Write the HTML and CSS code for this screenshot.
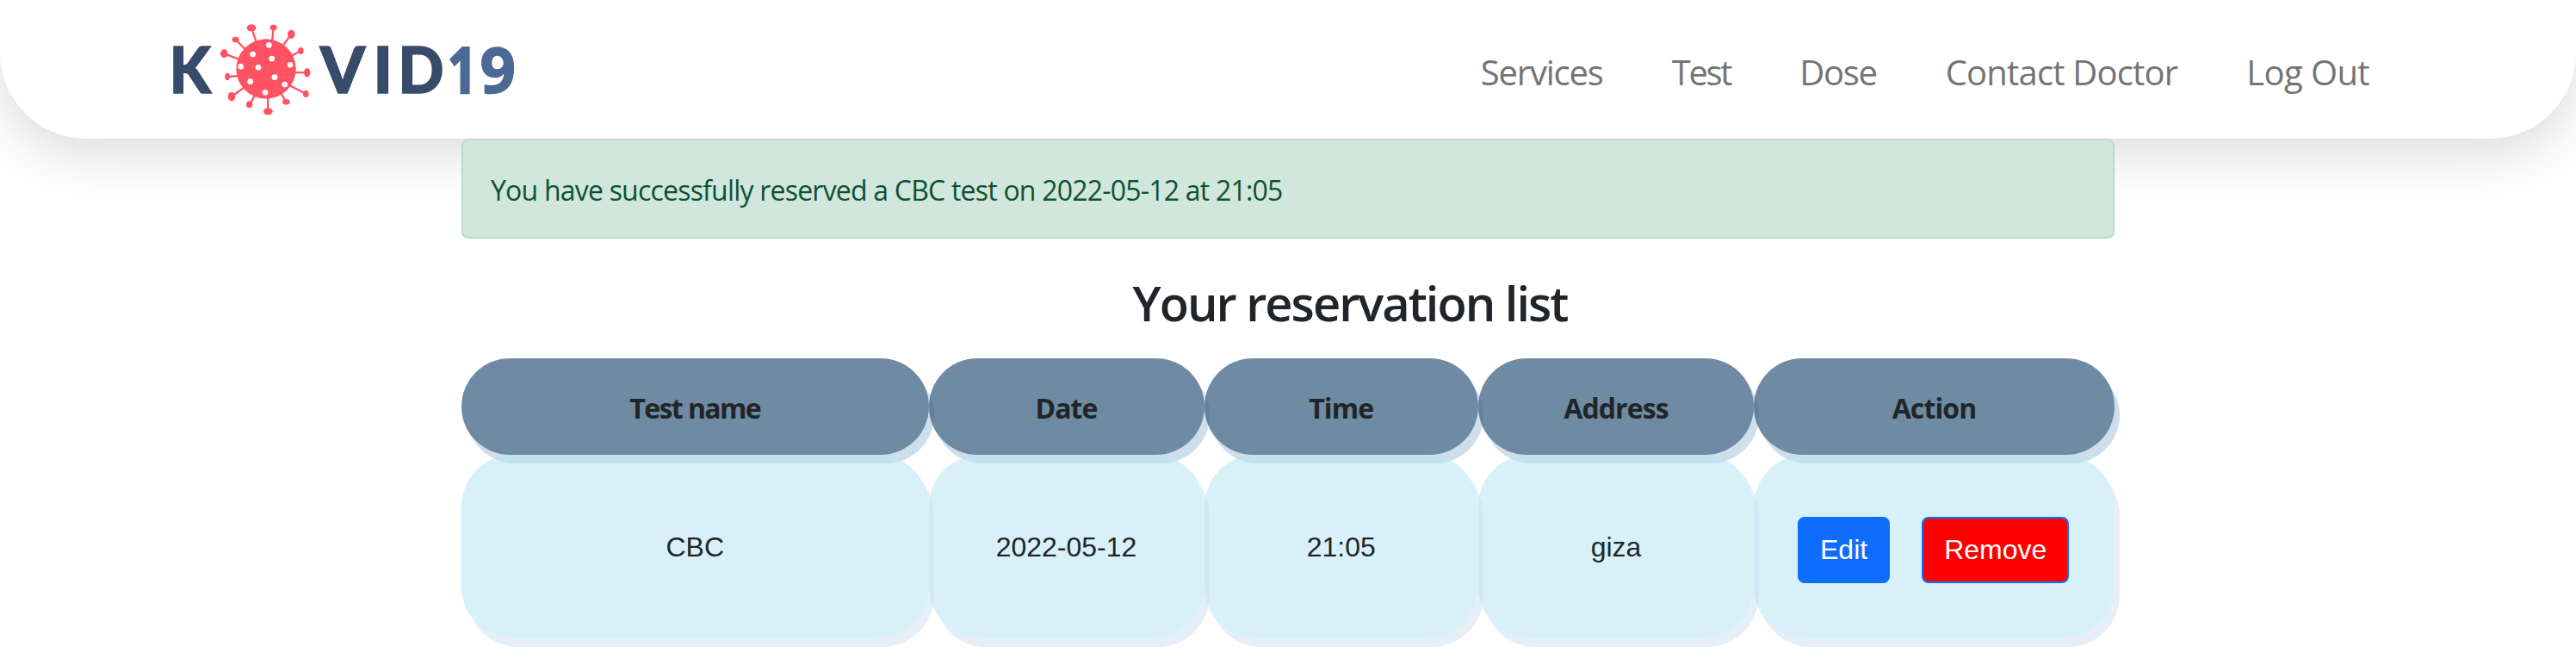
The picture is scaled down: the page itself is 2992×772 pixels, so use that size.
FILE: index.html
```
<!DOCTYPE html>
<html lang="en">
<head>
<meta charset="utf-8">
<title>Kovid19 - Reservations</title>
<link rel="stylesheet" href="styles.css">
</head>
<body>
<header class="navbar">
  <a class="brand" aria-label="Kovid19">
    <svg class="logo" viewBox="190 10 420 130" width="420" height="130">
      <g class="logo-text">
        <text x="196.700" y="108.300" textLength="48" lengthAdjust="spacingAndGlyphs">K</text>
        <text x="372" y="108.300">V</text>
        <text x="433.500" y="108.300">I</text>
        <text x="462.500" y="108.300" textLength="53" lengthAdjust="spacingAndGlyphs">D</text>
        <text class="logo-num one" x="520" y="108" textLength="34" lengthAdjust="spacingAndGlyphs">1</text>
        <text class="logo-num" x="557.500" y="108.300" textLength="41.500" lengthAdjust="spacingAndGlyphs">9</text>
      </g>
      <g transform="translate(250 20) scale(.33333)">
        <path class="spikes" d="M177 180L126 37M188 180L203 36M177 180L265 59M177 180L298 117M177 191L320 193M177 195L316 267M180 180L247 295M182 180L184 328M177 200L120 304M177 190L57 276M177 198L43 207M177 182L32 127M177 185L71 78"/>
        <g class="virus">
          <circle cx="177" cy="180" r="104"/>
          <ellipse cx="126" cy="37" rx="16" ry="12"/>
          <ellipse cx="203" cy="36" rx="12" ry="10"/>
          <ellipse cx="265" cy="59" rx="13" ry="15"/>
          <ellipse cx="298" cy="117" rx="10" ry="12"/>
          <ellipse cx="320" cy="193" rx="11" ry="16"/>
          <ellipse cx="316" cy="267" rx="10" ry="12"/>
          <ellipse cx="247" cy="295" rx="13" ry="10"/>
          <ellipse cx="184" cy="328" rx="16" ry="12"/>
          <ellipse cx="119" cy="304" rx="11" ry="12"/>
          <ellipse cx="57" cy="276" rx="13" ry="16"/>
          <ellipse cx="42" cy="207" rx="8" ry="13"/>
          <ellipse cx="31" cy="127" rx="13" ry="15"/>
          <ellipse cx="71" cy="78" rx="12" ry="10"/>
        </g>
        <g class="dots">
          <circle cx="187" cy="97" r="10"/><circle cx="131" cy="129" r="10"/><circle cx="197" cy="144" r="10"/>
          <circle cx="261" cy="166" r="10"/><circle cx="89" cy="172" r="10"/><circle cx="150" cy="175" r="10"/>
          <circle cx="207" cy="209" r="10"/><circle cx="122" cy="224" r="10"/><circle cx="242" cy="234" r="10"/>
          <circle cx="174" cy="262" r="10"/>
        </g>
      </g>
    </svg>
  </a>
  <nav class="menu">
    <a class="link services">Services</a>
    <a class="link test">Test</a>
    <a class="link dose">Dose</a>
    <a class="link contact">Contact Doctor</a>
    <a class="link logout">Log Out</a>
  </nav>
</header>
<main class="container">
  <div class="alert">You have successfully reserved a CBC test on 2022-05-12 at 21:05</div>
  <h2 class="title">Your reservation list</h2>
  <div class="table">
    <div class="th name">Test name</div>
    <div class="th">Date</div>
    <div class="th">Time</div>
    <div class="th">Address</div>
    <div class="th">Action</div>
    <div class="td">CBC</div>
    <div class="td">2022-05-12</div>
    <div class="td">21:05</div>
    <div class="td">giza</div>
    <div class="td actions">
      <button class="btn">Edit</button>
      <button class="btn remove">Remove</button>
    </div>
  </div>
</main>
</body>
</html>
```
FILE: styles.css
```
* { box-sizing: border-box; }
body {
  margin: 0;
  min-height: 772px;
  background: #fff;
  color: #212529;
  font-family: "Open Sans", "Noto Sans", sans-serif;
  font-size: 32px;
  line-height: 48px;
}
.navbar {
  height: 161px;
  padding: 10px 240px 0 190px;
  display: flex;
  justify-content: space-between;
  align-items: flex-start;
  background: #fff;
  border-radius: 0 0 100px 100px;
  box-shadow: 0 16px 64px rgba(0, 0, 0, .15);
}
.logo { display: block; }
.logo-text {
  font-family: Lato, sans-serif;
  font-weight: 900;
  font-size: 74px;
  fill: #394b6b;
  stroke: #394b6b;
  stroke-width: 1.6;
}
.logo-num {
  font-family: "Noto Sans", sans-serif;
  font-weight: 700;
  fill: #4c6894;
  stroke: #4c6894;
}
.one { stroke-width: 2.6; }
.virus { fill: #ff5364; }
.spikes { fill: none; stroke: #ff5364; stroke-width: 7; }
.dots { fill: #fff; }
.menu {
  display: flex;
  gap: 80px;
  padding-top: 44px;
}
.link {
  font-size: 40px;
  line-height: 60px;
  color: #747474;
  white-space: nowrap;
}
.services { letter-spacing: -1.2px; }
.test { letter-spacing: -2.3px; }
.dose { letter-spacing: -1.3px; }
.contact { letter-spacing: -.82px; }
.logout { letter-spacing: -.6px; }
.container {
  width: 1920px;
  margin: 0 auto;
}
.alert {
  position: relative;
  height: 116px;
  padding: 34px 32px;
  border: 2px solid #badbcc;
  border-radius: 8px;
  background: #d1e7dd;
  color: #0f5132;
  letter-spacing: -.79px;
}
.title {
  margin: 41px 0 31px;
  padding-left: 144px;
  text-align: center;
  font-size: 56px;
  line-height: 67px;
  font-weight: 600;
  letter-spacing: -2px;
}
.table {
  display: grid;
  grid-template-columns: 542.5px 320px 318.5px 320px 419px;
  grid-template-rows: 112px 213px;
  text-align: center;
}
.th {
  padding-top: 34px;
  border-radius: 60px;
  background: rgba(58, 95, 129, .73);
  box-shadow: 6px 10px #cfdeeb;
  font-weight: 700;
  letter-spacing: -.9px;
}
.name { letter-spacing: -1.6px; }
.td {
  padding-top: 83px;
  border-radius: 60px;
  background: rgba(184, 230, 244, .55);
  box-shadow: 6px 10px #e6eff8;
  font-family: "Liberation Sans", Arial, sans-serif;
}
.actions {
  display: flex;
  justify-content: flex-start;
  gap: 37px;
  padding: 72px 0 0 51px;
}
.btn {
  height: 77px;
  padding: 0 24px;
  border: 2px solid #0d6efd;
  border-radius: 8px;
  background: #0d6efd;
  color: #fff;
  font: 32px "Liberation Sans", Arial, sans-serif;
}
.remove { background: #f00; }
```
